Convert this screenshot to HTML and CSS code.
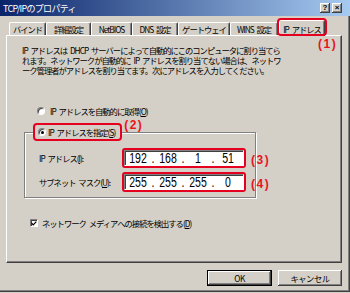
FILE: index.html
```html
<!DOCTYPE html>
<html lang="ja">
<head>
<meta charset="utf-8">
<title>TCP/IPのプロパティ</title>
<link rel="stylesheet" href="styles.css">
</head>
<body>
<div class="window">
  <div class="titlebar">
    <span class="title">TCP/IPのプロパティ</span>
    <div class="caption-btns">
      <span class="cbtn">?</span>
      <span class="cbtn">×</span>
    </div>
  </div>
  <div class="tabs">
    <div class="tab t1">バインド</div>
    <div class="tab t2">詳細設定</div>
    <div class="tab t3">NetBIOS</div>
    <div class="tab t4">DNS 設定</div>
    <div class="tab t5">ゲートウェイ</div>
    <div class="tab t6">WINS 設定</div>
    <div class="tab active">IP アドレス</div>
  </div>
  <div class="panel">
    <span class="note note1">(1)</span>
    <p class="desc"><span class="line">IP アドレスは DHCP サーバーによって自動的にこのコンピュータに割り当てら</span><span class="line">れます。ネットワークが自動的に IP アドレスを割り当てない場合は、ネットワ</span><span class="line">ーク管理者がアドレスを割り当てます。次にアドレスを入力してください。</span></p>
    <div class="radio-row"><span class="radio"></span><span>IP アドレスを自動的に取得(<u>O</u>)</span></div>
    <fieldset class="group">
      <legend class="legend"><span class="legend-inner"><span class="radio on"></span><span>IP アドレスを指定(<u>S</u>)</span></span><span class="note note2">(2)</span></legend>
      <div class="field-row">
        <span class="field-label">IP アドレス(<u>I</u>):</span>
        <div class="ipwrap">
          <div class="ipbox"><span class="oct">192</span><span class="dot">.</span><span class="oct">168</span><span class="dot">.</span><span class="oct">1</span><span class="dot">.</span><span class="oct">51</span></div>
          <span class="note note-side">(3)</span>
        </div>
      </div>
      <div class="field-row second">
        <span class="field-label">サブネット マスク(<u>U</u>):</span>
        <div class="ipwrap">
          <div class="ipbox"><span class="oct">255</span><span class="dot">.</span><span class="oct">255</span><span class="dot">.</span><span class="oct">255</span><span class="dot">.</span><span class="oct">0</span></div>
          <span class="note note-side">(4)</span>
        </div>
      </div>
    </fieldset>
    <div class="check-row"><span class="checkbox"><svg width="7" height="7" viewBox="0 0 7 7"><polyline points="0.8,3.2 2.6,5.2 6.2,1.2" fill="none" stroke="#000" stroke-width="1.4"/></svg></span><span>ネットワーク メディアへの接続を検出する(<u>D</u>)</span></div>
  </div>
  <div class="buttons">
    <button class="btn default">OK</button>
    <button class="btn">キャンセル</button>
  </div>
</div>
</body>
</html>
```

FILE: styles.css
```css
* { box-sizing: border-box; }
html, body { margin: 0; padding: 0; background: #d4d0c8; }
body {
  width: 350px;
  height: 293px;
  overflow: hidden;
  font-family: "Noto Sans CJK JP", sans-serif;
  font-size: 8.3px;
  letter-spacing: -1px;
  word-spacing: 2px;
  color: #000;
}
u { text-decoration: underline; text-underline-offset: 1px; }

.window {
  width: 350px;
  height: 292px;
  background: #d4d0c8;
  box-shadow: inset -1px -1px 0 #404040, inset -2px -2px 0 #808080;
  display: flex;
  flex-direction: column;
}

.titlebar {
  height: 16px;
  flex: none;
  background: linear-gradient(to right, #0a246a, #a6caf0);
  display: flex;
  align-items: center;
  justify-content: space-between;
  padding: 0 8px 0 3px;
}
.title { color: #fff; font-size: 9px; letter-spacing: -0.7px; }
.caption-btns { display: flex; gap: 2px; }
.cbtn {
  width: 10px;
  height: 10px;
  background: #d4d0c8;
  box-shadow: inset -1px -1px 0 #404040, inset 1px 1px 0 #fff, inset -2px -2px 0 #808080;
  font: bold 8px "Liberation Sans", sans-serif;
  letter-spacing: 0;
  display: flex;
  align-items: center;
  justify-content: center;
  line-height: 1;
}

.tabs {
  height: 19px;
  flex: none;
  display: flex;
  align-items: flex-end;
  padding-left: 9px;
}
.tab {
  height: 13px;
  border: 1px solid;
  border-color: #fff #404040 transparent #fff;
  border-bottom: none;
  border-radius: 2px 2px 0 0;
  box-shadow: inset -1px 0 0 #808080;
  display: flex;
  align-items: center;
  justify-content: center;
  white-space: nowrap;
}
.t1 { width: 37px; }
.t2 { width: 45px; }
.t3 { width: 41px; }
.t4 { width: 46px; }
.t5 { width: 52px; }
.t6 { width: 48px; }
.tab.active {
  width: 46px;
  height: 16px;
  margin-bottom: -1px;
  margin-left: 1px;
  background: #d4d0c8;
  position: relative;
  z-index: 1;
}
.tab.active::after {
  content: "";
  position: absolute;
  top: -3px;
  left: -3px;
  right: -3px;
  bottom: 0;
  border: 2px solid #e60020;
  border-radius: 4px;
}

.panel {
  flex: none;
  margin: 0 8px 0 6px;
  height: 228px;
  border: 1px solid;
  border-color: #fff #404040 #404040 #fff;
  box-shadow: inset -1px -1px 0 #808080;
  position: relative;
  padding-top: 9px;
}

.note {
  position: absolute;
  color: #e8141c;
  font: bold 12px "Liberation Sans", sans-serif;
  letter-spacing: 1.5px;
  word-spacing: 0;
  line-height: 12px;
  white-space: nowrap;
}
.note1 { left: 311px; top: 2px; }
.note2 { left: calc(100% + 4px); top: -6px; }
.note-side { left: calc(100% + 7px); top: 2px; line-height: 16px; }

.desc {
  margin: 0 0 0 15px;
  white-space: nowrap;
}
.desc .line {
  display: block;
  height: 10px;
  line-height: 10px;
}

.radio-row {
  margin: 31px 0 0 30px;
  height: 10px;
  display: flex;
  align-items: center;
  gap: 5px;
  white-space: nowrap;
}
.radio {
  flex: none;
  width: 8px;
  height: 8px;
  border-radius: 50%;
  background: #fff;
  border: 1px solid;
  border-color: #808080 #fff #fff #808080;
  box-shadow: inset 1px 1px 0 #404040;
  position: relative;
}
.radio.on::after {
  content: "";
  position: absolute;
  left: 1.5px;
  top: 1.5px;
  width: 3px;
  height: 3px;
  border-radius: 50%;
  background: #000;
}

.group {
  margin: 7px 0 0 17px;
  width: 232px;
  height: 75px;
  min-width: 0;
  padding: 0;
  border: 1px solid #808080;
  box-shadow: 1px 1px 0 #fff, inset 1px 1px 0 #fff;
}
.legend {
  margin-left: 8px;
  padding: 0 5px 0 3px;
  height: 18px;
  border: 2px solid #e60020;
  border-radius: 4px;
  background: #d4d0c8;
  position: relative;
}
.legend-inner {
  display: flex;
  align-items: center;
  gap: 2px;
  height: 14px;
  white-space: nowrap;
}

.field-row {
  margin: 7px 0 0 14px;
  display: flex;
  align-items: center;
  height: 20px;
}
.field-row.second { margin-top: 4px; }
.field-label { width: 83px; white-space: nowrap; }
.ipwrap {
  position: relative;
  border: 2px solid #e60020;
  border-radius: 3px;
}
.ipbox {
  width: 120px;
  height: 16px;
  background: #fff;
  border: 1px solid;
  border-color: #808080 #fff #fff #808080;
  box-shadow: inset 1px 1px 0 #404040;
  display: flex;
  align-items: center;
  padding-left: 1px;
  font: 14px "Liberation Sans", sans-serif;
  letter-spacing: 0;
  word-spacing: 0;
  line-height: 14px;
}
.oct { width: 24px; text-align: center; transform: scaleX(0.75); }
.dot { width: 6px; text-align: center; transform: scaleX(0.75); }

.check-row {
  margin: 20px 0 0 23px;
  height: 10px;
  display: flex;
  align-items: center;
  gap: 4px;
  white-space: nowrap;
}
.checkbox {
  flex: none;
  width: 8px;
  height: 8px;
  background: #fff;
  border: 1px solid;
  border-color: #808080 #fff #fff #808080;
  box-shadow: inset 1px 1px 0 #404040;
  display: flex;
  align-items: center;
  justify-content: center;
}
.checkbox svg { display: block; }

.buttons {
  margin-top: 7px;
  display: flex;
  justify-content: flex-end;
  gap: 6px;
  padding-right: 8px;
}
.btn {
  font: inherit;
  letter-spacing: -0.5px;
  height: 16px;
  width: 64px;
  padding: 0;
  border: none;
  background: #d4d0c8;
  color: #000;
  box-shadow: inset -1px -1px 0 #404040, inset 1px 1px 0 #fff, inset -2px -2px 0 #808080;
}
.btn.default {
  width: 65px;
  box-shadow: inset 0 0 0 1px #000, inset -2px -2px 0 #404040, inset 2px 2px 0 #fff, inset -3px -3px 0 #808080;
}
```
